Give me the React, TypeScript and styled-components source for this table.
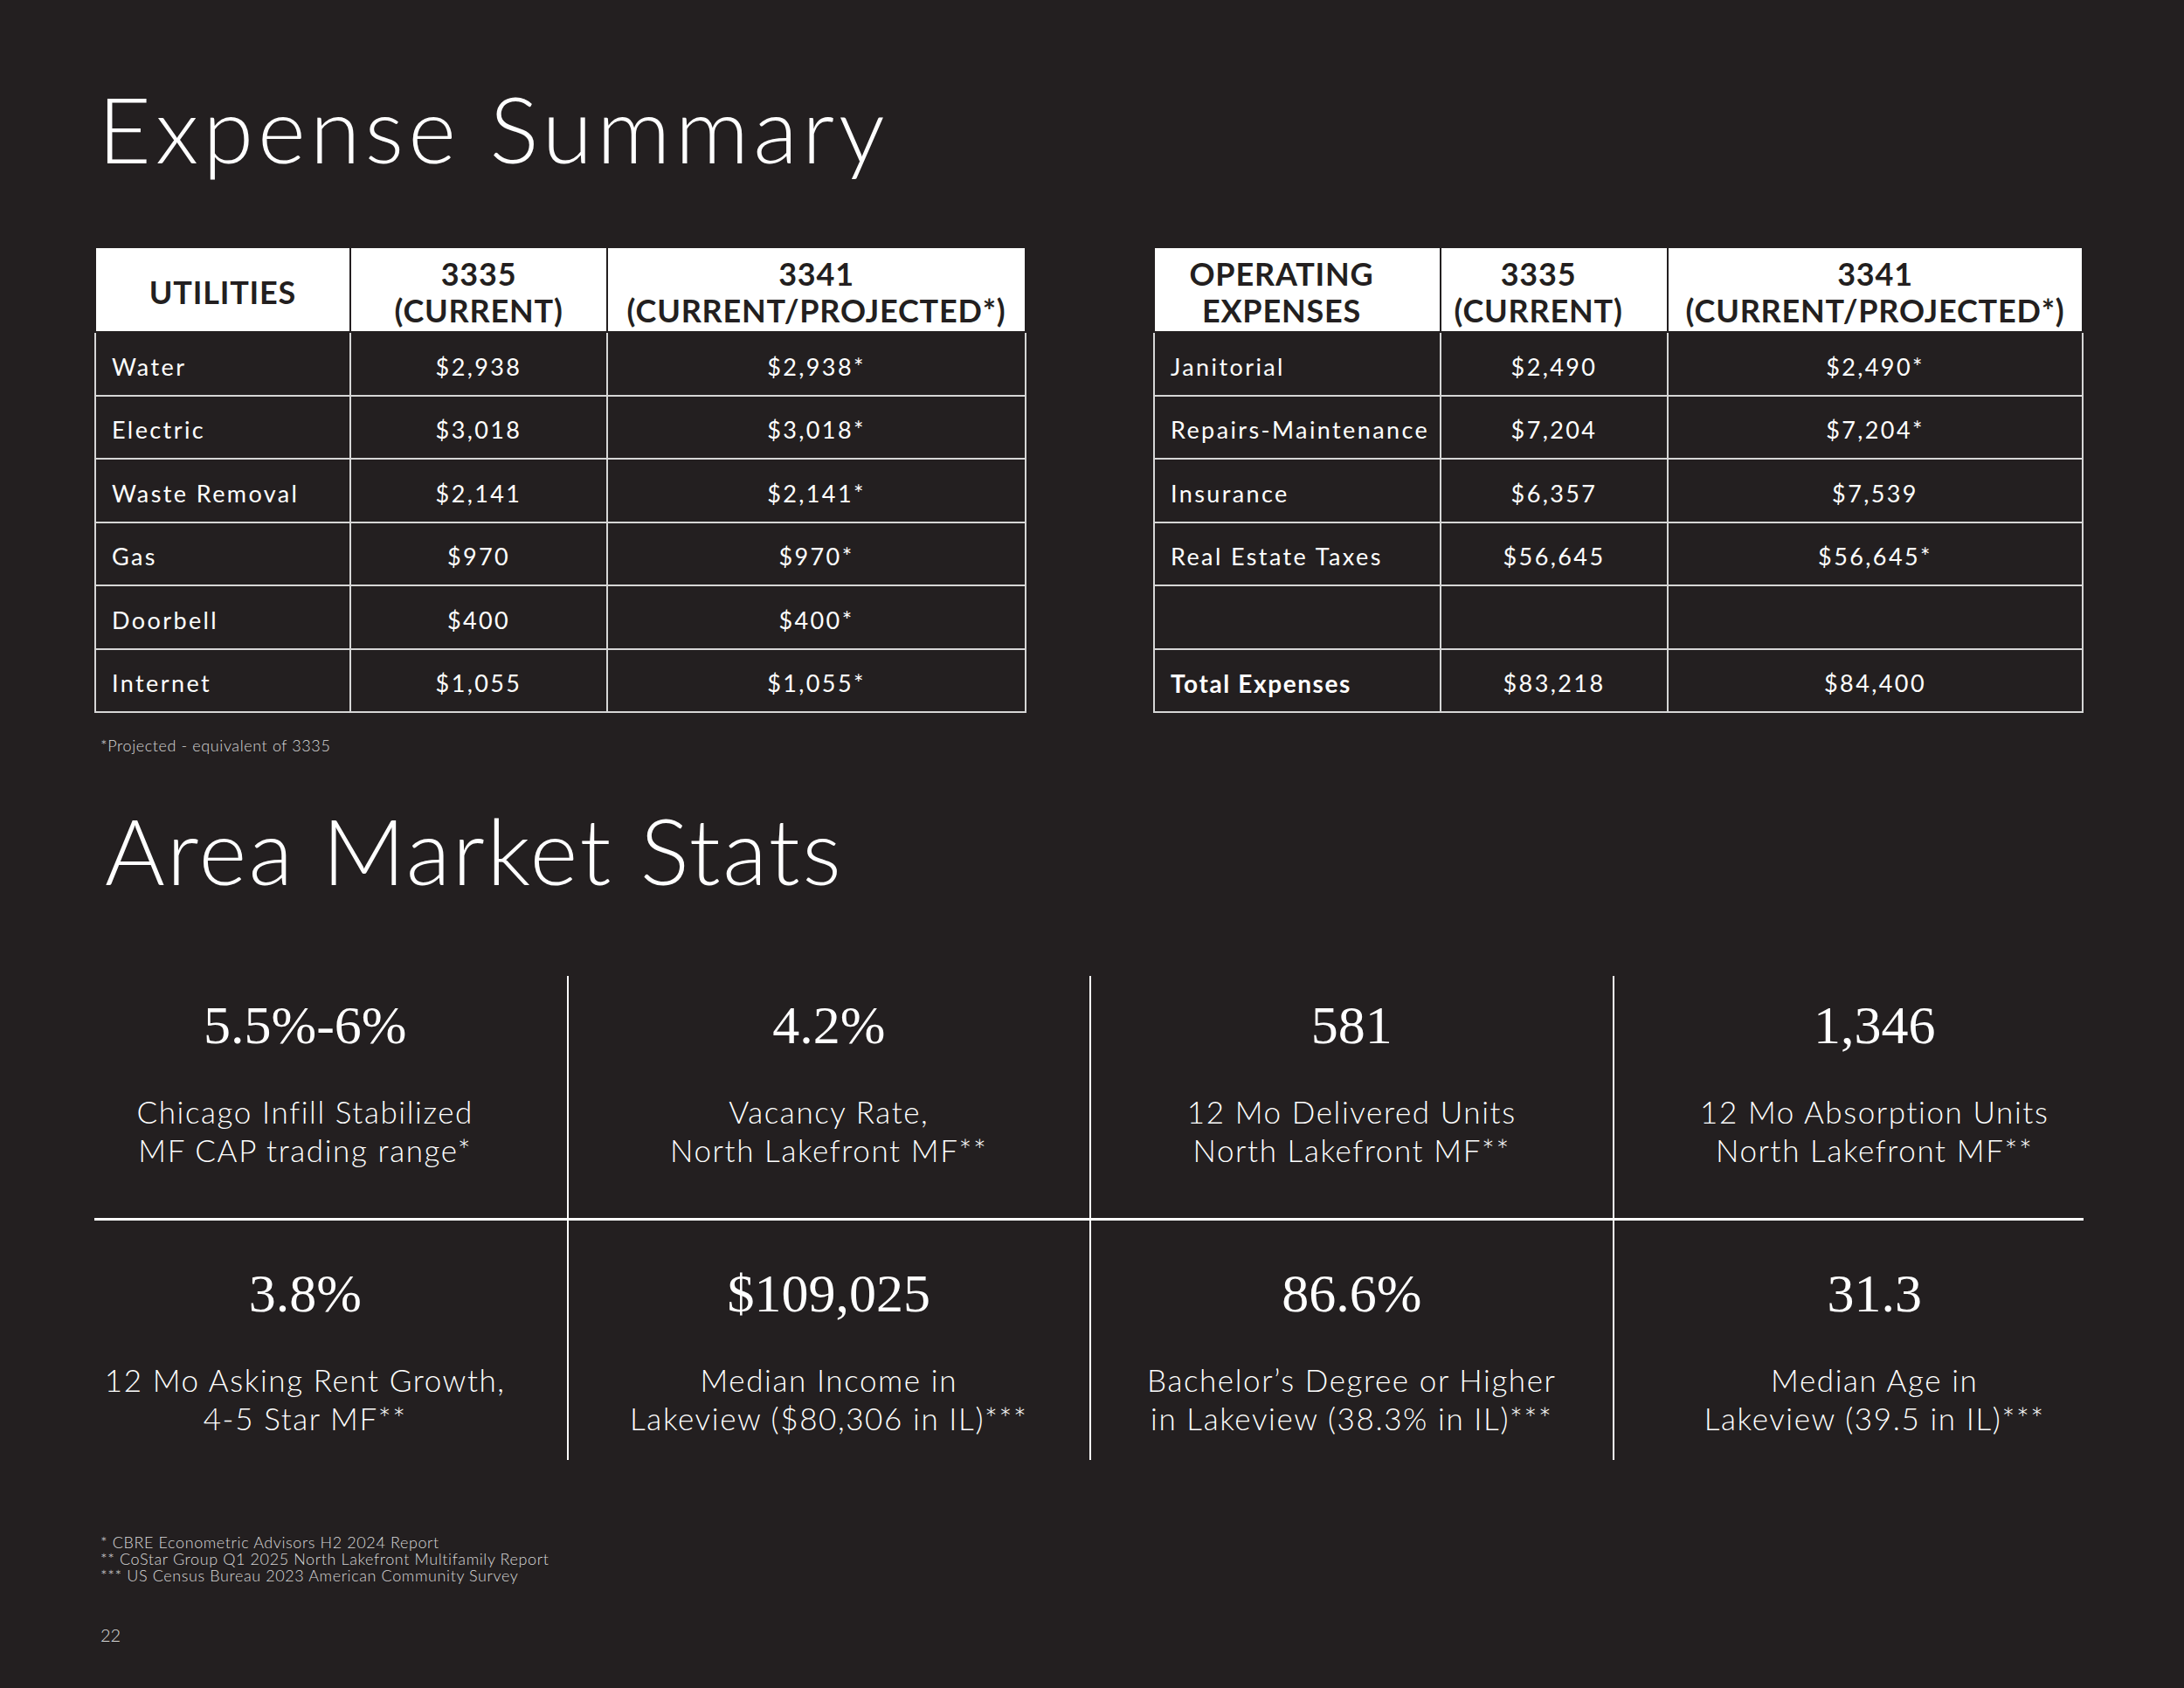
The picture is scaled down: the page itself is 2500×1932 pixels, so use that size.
import styled, { createGlobalStyle } from 'styled-components'

const GlobalStyle = createGlobalStyle`
  html, body {
    margin: 0;
    padding: 0;
    background: #231f20;
  }
  body {
    font-family: Lato, 'Liberation Sans', sans-serif;
    color: #ffffff;
  }
`

const Page = styled.div`
  width: 2500px;
  height: 1932px;
  box-sizing: border-box;
  padding: 94px 115px 0 108px;
  display: flex;
  flex-direction: column;
  overflow: hidden;
`

const Heading = styled.h1<{ $top: number; $left: number; $spacing: number }>`
  margin: ${(p) => p.$top}px 0 0 ${(p) => p.$left}px;
  font-family: Lato, 'Liberation Sans', sans-serif;
  font-weight: 300;
  font-size: 105px;
  line-height: 105px;
  letter-spacing: ${(p) => p.$spacing}px;
  color: #ffffff;
`

const TablesRow = styled.div`
  display: flex;
  justify-content: space-between;
  align-items: flex-start;
  margin-top: 83px;
`

const Table = styled.table<{ $width: number }>`
  width: ${(p) => p.$width}px;
  border-collapse: collapse;
  table-layout: fixed;
`

const HeadRow = styled.tr`
  height: 97px;
`

const BodyRow = styled.tr`
  height: 72.5px;
`

const HeadCell = styled.th<{ $shift?: number }>`
  background: #ffffff;
  color: #231f20;
  border: 2px solid #231f20;
  padding: 4px ${(p) => p.$shift ?? 0}px 0 0;
  font-family: Lato, 'Liberation Sans', sans-serif;
  font-weight: 700;
  font-size: 36px;
  line-height: 42px;
  letter-spacing: 0.8px;
  text-align: center;
  vertical-align: middle;
  white-space: nowrap;
`

const Cell = styled.td<{ $label?: boolean; $bold?: boolean }>`
  border: 2px solid #d6d6d6;
  padding: 6px 0 0 ${(p) => (p.$label ? '18px' : '0')};
  font-size: ${(p) => (p.$bold ? 28 : 27)}px;
  font-weight: ${(p) => (p.$bold ? 700 : 400)};
  letter-spacing: ${(p) => (p.$bold ? '1.6px' : '2.4px')};
  text-align: ${(p) => (p.$label ? 'left' : 'center')};
  white-space: nowrap;
  color: #ffffff;
`

const Note = styled.div<{ $top: number }>`
  margin: ${(p) => p.$top}px 0 0 7px;
  font-size: 18px;
  font-weight: 300;
  line-height: 19px;
  letter-spacing: 0.6px;
  color: #d9d9d9;
`

const StatsGrid = styled.div`
  display: grid;
  grid-template-columns: repeat(4, 1fr);
  margin: 92px -59px 0 -58px;
`

const StatCell = styled.div<{ $bottom?: boolean; $first?: boolean }>`
  display: flex;
  flex-direction: column;
  align-items: center;
  padding: ${(p) => (p.$bottom ? '52px 0 26px' : '25px 0 56px')};
  border-left: ${(p) => (p.$first ? 'none' : '2px solid #ffffff')};
`

const StatValue = styled.div`
  font-family: 'Liberation Serif', 'DejaVu Serif', serif;
  font-size: 62px;
  line-height: 62px;
  color: #ffffff;
`

const StatLabel = styled.div`
  margin-top: 46px;
  font-size: 35px;
  line-height: 44px;
  font-weight: 300;
  letter-spacing: 1.6px;
  text-align: center;
  white-space: nowrap;
`

const Divider = styled.div`
  grid-column: 1 / -1;
  height: 3px;
  margin: 0 59px 0 58px;
  background: #ffffff;
`

const PageNumber = styled.div`
  margin: 46px 0 0 7px;
  font-size: 20px;
  font-weight: 300;
  line-height: 24px;
  color: #d9d9d9;
`

type Row = { label: string; current: string; projected: string; bold?: boolean }

const utilities: Row[] = [
  { label: 'Water', current: '$2,938', projected: '$2,938*' },
  { label: 'Electric', current: '$3,018', projected: '$3,018*' },
  { label: 'Waste Removal', current: '$2,141', projected: '$2,141*' },
  { label: 'Gas', current: '$970', projected: '$970*' },
  { label: 'Doorbell', current: '$400', projected: '$400*' },
  { label: 'Internet', current: '$1,055', projected: '$1,055*' },
]

const operating: Row[] = [
  { label: 'Janitorial', current: '$2,490', projected: '$2,490*' },
  { label: 'Repairs-Maintenance', current: '$7,204', projected: '$7,204*' },
  { label: 'Insurance', current: '$6,357', projected: '$7,539' },
  { label: 'Real Estate Taxes', current: '$56,645', projected: '$56,645*' },
  { label: '\u00a0', current: '\u00a0', projected: '\u00a0' },
  { label: 'Total Expenses', current: '$83,218', projected: '$84,400', bold: true },
]

const stats = [
  { value: '5.5%-6%', label: ['Chicago Infill Stabilized', 'MF CAP trading range*'] },
  { value: '4.2%', label: ['Vacancy Rate,', 'North Lakefront MF**'] },
  { value: '581', label: ['12 Mo Delivered Units', 'North Lakefront MF**'] },
  { value: '1,346', label: ['12 Mo Absorption Units', 'North Lakefront MF**'] },
  { value: '3.8%', label: ['12 Mo Asking Rent Growth,', '4-5 Star MF**'] },
  { value: '$109,025', label: ['Median Income in', 'Lakeview ($80,306 in IL)***'] },
  { value: '86.6%', label: ['Bachelor\u2019s Degree or Higher', 'in Lakeview (38.3% in IL)***'] },
  { value: '31.3', label: ['Median Age in', 'Lakeview (39.5 in IL)***'] },
]

interface ExpenseTableProps {
  title: string[]
  widths: number[]
  rows: Row[]
  shift?: number
}

const ExpenseTable = ({ title, widths, rows, shift = 0 }: ExpenseTableProps) => {
  const total = widths.reduce((a, b) => a + b, 0)
  return (
    <Table $width={total}>
      <colgroup>
        {widths.map((w, i) => (
          <col key={i} style={{ width: w }} />
        ))}
      </colgroup>
      <thead>
        <HeadRow>
          <HeadCell $shift={shift}>
            {title.map((t, i) => (
              <div key={i}>{t}</div>
            ))}
          </HeadCell>
          <HeadCell $shift={shift}>
            3335
            <br />
            (CURRENT)
          </HeadCell>
          <HeadCell>
            3341
            <br />
            (CURRENT/PROJECTED*)
          </HeadCell>
        </HeadRow>
      </thead>
      <tbody>
        {rows.map((r, i) => (
          <BodyRow key={i}>
            <Cell $label $bold={r.bold}>
              {r.label}
            </Cell>
            <Cell>{r.current}</Cell>
            <Cell>{r.projected}</Cell>
          </BodyRow>
        ))}
      </tbody>
    </Table>
  )
}

const App = () => {
  return (
    <>
      <GlobalStyle />
      <Page>
        <Heading $top={0} $left={4} $spacing={5}>
          Expense Summary
        </Heading>
        <TablesRow>
          <ExpenseTable title={['UTILITIES']} widths={[292, 294, 479]} rows={utilities} />
          <ExpenseTable
            title={['OPERATING', 'EXPENSES']}
            widths={[328, 260, 475]}
            rows={operating}
            shift={36}
          />
        </TablesRow>
        <Note $top={28}>*Projected - equivalent of 3335</Note>

        <Heading $top={57} $left={12} $spacing={2.4}>
          Area Market Stats
        </Heading>
        <StatsGrid>
          {stats.slice(0, 4).map((s, i) => (
            <StatCell key={s.value} $first={i === 0}>
              <StatValue>{s.value}</StatValue>
              <StatLabel>
                {s.label[0]}
                <br />
                {s.label[1]}
              </StatLabel>
            </StatCell>
          ))}
          <Divider />
          {stats.slice(4).map((s, i) => (
            <StatCell key={s.value} $first={i === 0} $bottom>
              <StatValue>{s.value}</StatValue>
              <StatLabel>
                {s.label[0]}
                <br />
                {s.label[1]}
              </StatLabel>
            </StatCell>
          ))}
        </StatsGrid>

        <Note $top={85}>
          * CBRE Econometric Advisors H2 2024 Report
          <br />
          ** CoStar Group Q1 2025 North Lakefront Multifamily Report
          <br />
          *** US Census Bureau 2023 American Community Survey
        </Note>
        <PageNumber>22</PageNumber>
      </Page>
    </>
  )
}

export default App
